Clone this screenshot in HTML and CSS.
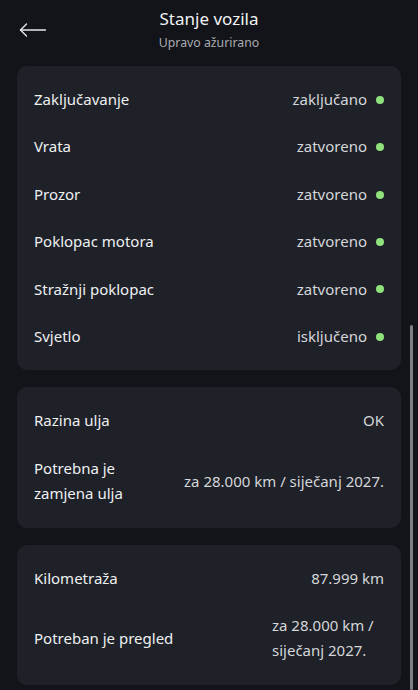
FILE: index.html
```html
<!DOCTYPE html>
<html lang="hr">
<head>
<meta charset="utf-8">
<title>Stanje vozila</title>
<link rel="stylesheet" href="styles.css">
</head>
<body>
<div class="screen">
  <header class="topbar">
    <button class="back" aria-label="Natrag">
      <svg width="28" height="16" viewBox="0 0 28 16" fill="none" stroke="#e6e7ea" stroke-width="1.4" stroke-linecap="round" stroke-linejoin="round">
        <path d="M1.5 8 H26.5"/>
        <path d="M7.5 2 L1.5 8 L7.5 14"/>
      </svg>
    </button>
    <div class="titles">
      <h1 class="title">Stanje vozila</h1>
      <p class="subtitle">Upravo ažurirano</p>
    </div>
  </header>

  <main class="content">
    <section class="card">
      <div class="row"><span class="label">Zaključavanje</span><span class="value">zaključano<i class="dot"></i></span></div>
      <div class="row"><span class="label">Vrata</span><span class="value">zatvoreno<i class="dot"></i></span></div>
      <div class="row"><span class="label">Prozor</span><span class="value">zatvoreno<i class="dot"></i></span></div>
      <div class="row"><span class="label">Poklopac motora</span><span class="value">zatvoreno<i class="dot"></i></span></div>
      <div class="row"><span class="label">Stražnji poklopac</span><span class="value">zatvoreno<i class="dot"></i></span></div>
      <div class="row"><span class="label">Svjetlo</span><span class="value">isključeno<i class="dot"></i></span></div>
    </section>

    <section class="card">
      <div class="row"><span class="label">Razina ulja</span><span class="value">OK</span></div>
      <div class="row"><span class="label label-narrow">Potrebna je zamjena ulja</span><span class="value">za 28.000 km / siječanj 2027.</span></div>
    </section>

    <section class="card">
      <div class="row"><span class="label">Kilometraža</span><span class="value">87.999 km</span></div>
      <div class="row"><span class="label">Potreban je pregled</span><span class="value value-narrow">za 28.000 km / siječanj 2027.</span></div>
    </section>
  </main>
  <div class="scrollbar"></div>
</div>
</body>
</html>
```

FILE: styles.css
```css
* { box-sizing: border-box; }

html, body {
  margin: 0;
  padding: 0;
  background: #121419;
}

body {
  font-family: "Noto Sans", "Open Sans", sans-serif;
  color: #eceef1;
  width: 418px;
  height: 690px;
  overflow: hidden;
}

.screen {
  position: relative;
  width: 418px;
  height: 690px;
}

.topbar {
  position: relative;
  height: 66px;
  display: flex;
  justify-content: center;
  padding-top: 6px;
}

.back {
  position: absolute;
  left: 19px;
  top: 22px;
  background: none;
  border: 0;
  padding: 0;
  display: flex;
  cursor: pointer;
}

.titles {
  display: flex;
  flex-direction: column;
  align-items: center;
}

.title {
  margin: 0;
  font-size: 17px;
  font-weight: 400;
  line-height: 26px;
  color: #f1f2f4;
}

.subtitle {
  margin: 0;
  font-size: 12.3px;
  line-height: 22px;
  color: #a9abb1;
}

.content {
  display: flex;
  flex-direction: column;
  gap: 17px;
  padding: 0 17px;
}

.card {
  background: #1f2128;
  border-radius: 10px;
  padding: 10px 17px;
  display: flex;
  flex-direction: column;
}

.row {
  display: flex;
  align-items: center;
  justify-content: space-between;
  gap: 20px;
  padding: 11px 0;
  font-size: 15px;
  line-height: 25.4px;
}

.label {
  color: #eef0f2;
}

.label-narrow {
  max-width: 125px;
}

.value {
  display: flex;
  align-items: center;
  color: #d4d6da;
  text-align: right;
}

.value-narrow {
  max-width: 112px;
  text-align: left;
}

.dot {
  width: 8px;
  height: 8px;
  border-radius: 50%;
  background: #8fe27c;
  margin-left: 9px;
}

.scrollbar {
  position: absolute;
  right: 5px;
  top: 325px;
  width: 3px;
  height: 365px;
  background: #7d7f85;
  border-radius: 2px;
}
```
